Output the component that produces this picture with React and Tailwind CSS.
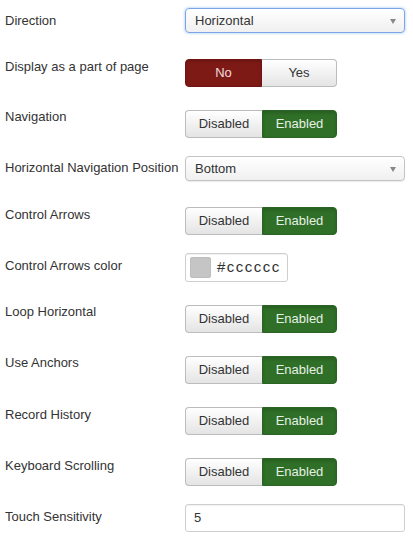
import React from "react"

const ROWS = [
  { label: "Direction", type: "select", value: "Horizontal", focus: true, row: "h-[50px]", lp: "pt-[4px]", cp: "pt-0" },
  { label: "Display as a part of page", type: "yesno", row: "h-[50px]", lp: "pt-0", cp: "pt-[1px]" },
  { label: "Navigation", type: "toggle", row: "h-[48px]", lp: "pt-0", cp: "pt-[2px]" },
  { label: "Horizontal Navigation Position", type: "select", value: "Bottom", row: "h-[50px]", lp: "pt-[3px]", cp: "pt-0" },
  { label: "Control Arrows", type: "toggle", row: "h-[47px]", lp: "pt-0", cp: "pt-[1px]" },
  { label: "Control Arrows color", type: "color", row: "h-[50px]", lp: "pt-[4px]", cp: "pt-0" },
  { label: "Loop Horizontal", type: "toggle", row: "h-[51px]", lp: "pt-0", cp: "pt-[2px]" },
  { label: "Use Anchors", type: "toggle", row: "h-[52px]", lp: "pt-0", cp: "pt-[2px]" },
  { label: "Record History", type: "toggle", row: "h-[51px]", lp: "pt-0", cp: "pt-[1px]" },
  { label: "Keyboard Scrolling", type: "toggle", row: "h-[47px]", lp: "pt-0", cp: "pt-[1px]" },
  { label: "Touch Sensitivity", type: "text", value: "5", row: "h-[33px]", lp: "pt-[4px]", cp: "pt-0" },
]

const off = "flex items-center justify-center h-full bg-gradient-to-b from-white to-[#e4e4e4] text-[#333] border border-[#bcbcbc]"

const Select = ({ value, focus }) => (
  <div className={`relative w-[220px] h-[25px] rounded-[4px] border bg-gradient-to-b from-white to-[#f0f0f0] flex items-center pl-[9px] text-[13px] text-[#333] ${focus ? "border-[#7aa6e6] shadow-[0_0_3px_rgba(82,150,230,0.6)]" : "border-[#c4c4c4] shadow-[0_1px_1px_rgba(0,0,0,0.08)]"}`}>
    {value}
    <span className="absolute right-[8px] top-[10px] w-0 h-0 border-l-[3.5px] border-r-[3.5px] border-t-[5px] border-l-transparent border-r-transparent border-t-[#888]" />
  </div>
)

const Toggle = () => (
  <div className="flex w-[152px] h-[28px] text-[13px]">
    <div className={`${off} w-[77px] rounded-l-[4px] border-r-0`}>Disabled</div>
    <div className="flex items-center justify-center h-full w-[75px] rounded-r-[4px] bg-[#2f6f27] border border-[#2a6323] text-[#e6efe4] shadow-[inset_0_2px_3px_rgba(0,0,0,0.15)]">Enabled</div>
  </div>
)

const YesNo = () => (
  <div className="flex w-[152px] h-[28px] text-[13px]">
    <div className="flex items-center justify-center h-full w-[77px] rounded-l-[4px] bg-[#7e1a16] border border-[#701511] text-[#f1dddc] shadow-[inset_0_2px_3px_rgba(0,0,0,0.15)]">No</div>
    <div className={`${off} w-[75px] rounded-r-[4px] border-l-0`}>Yes</div>
  </div>
)

const Color = () => (
  <div className="flex items-center w-[103px] h-[29px] rounded-[3px] border border-[#cfcfcf] bg-white shadow-[inset_0_1px_1px_rgba(0,0,0,0.06)]">
    <div className="ml-[4px] w-[21px] h-[21px] rounded-[2px] bg-[#c5c5c5] border border-[#bdbdbd]" />
    <span className="ml-[6px] text-[15px] tracking-[1.5px] text-[#333]">#cccccc</span>
  </div>
)

const TextInput = ({ value }) => (
  <div className="flex items-center w-[220px] h-[28px] rounded-[3px] border border-[#cfcfcf] bg-white pl-[8px] text-[13px] text-[#333] shadow-[inset_0_1px_1px_rgba(0,0,0,0.06)]">
    {value}
  </div>
)

export default function App() {
  return (
    <div className="w-[413px] h-[537px] bg-white pt-[8px] overflow-hidden" style={{ fontFamily: '"Liberation Sans", Arial, sans-serif' }}>
      {ROWS.map((r) => (
        <div key={r.label} className={`flex ${r.row}`}>
          <div className={`w-[185px] pl-[5px] text-[13px] leading-[18px] text-[#333] ${r.lp}`}>{r.label}</div>
          <div className={r.cp}>
            {r.type === "select" && <Select value={r.value} focus={r.focus} />}
            {r.type === "toggle" && <Toggle />}
            {r.type === "yesno" && <YesNo />}
            {r.type === "color" && <Color />}
            {r.type === "text" && <TextInput value={r.value} />}
          </div>
        </div>
      ))}
    </div>
  )
}
